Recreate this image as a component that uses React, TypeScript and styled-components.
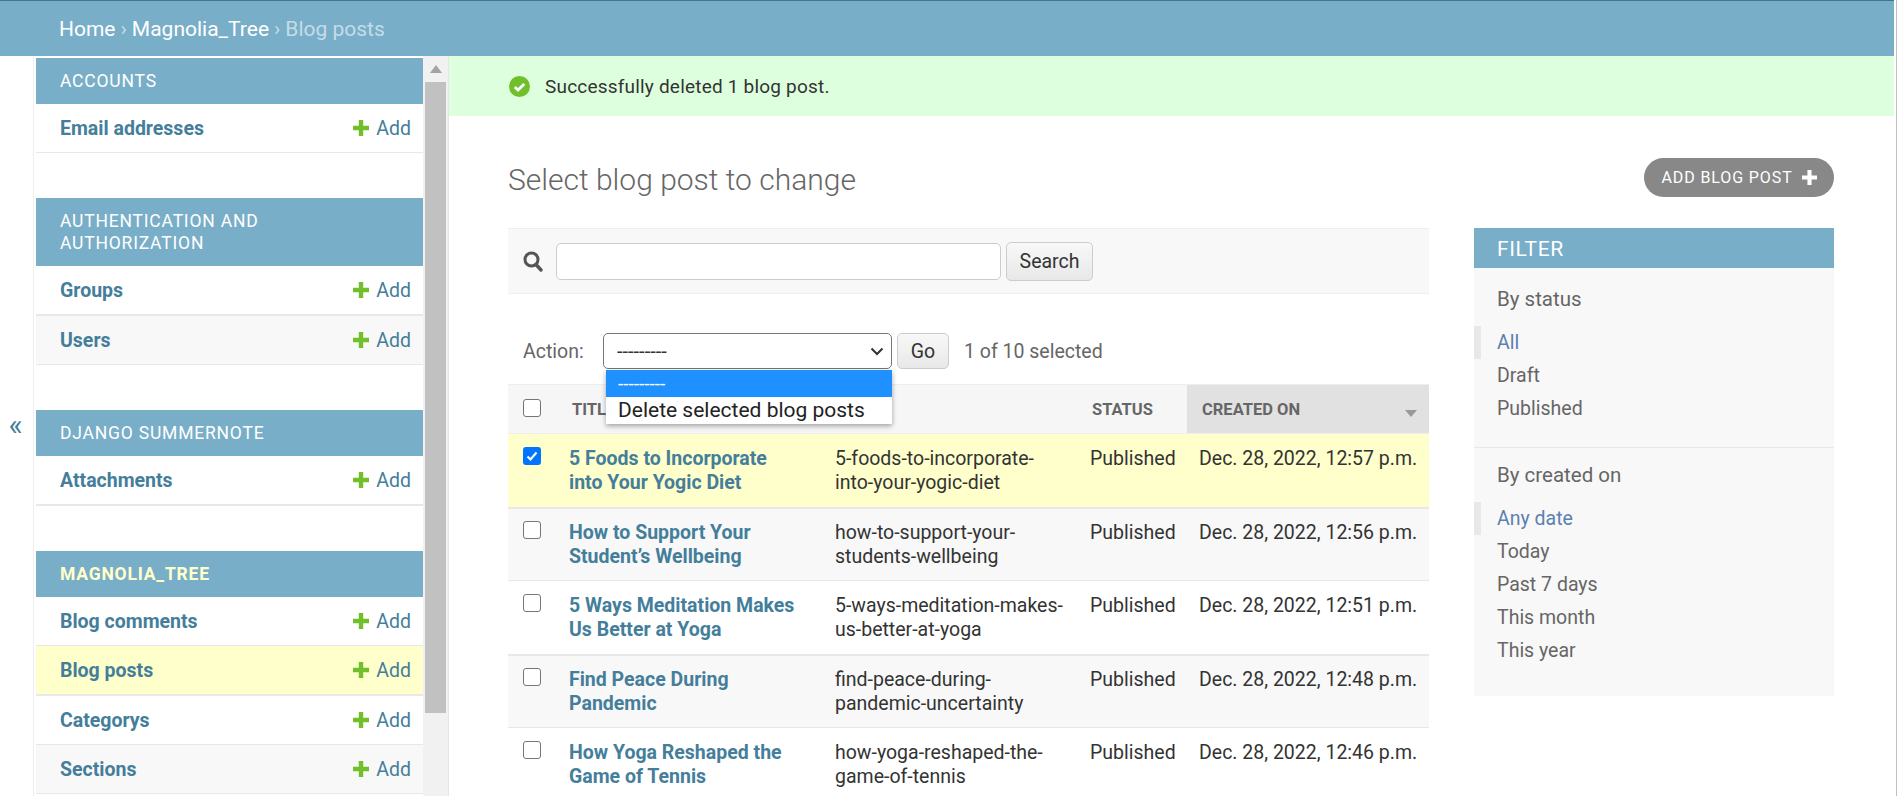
import React from 'react'
import styled, { createGlobalStyle } from 'styled-components'

const GlobalStyle = createGlobalStyle`
  html, body {
    margin: 0;
    padding: 0;
    height: 100%;
    overflow: hidden;
    background: #fff;
    font-family: Roboto, "Liberation Sans", sans-serif;
    color: #333;
  }
  * { box-sizing: border-box; }
`

const Page = styled.div`
  width: 1897px;
  height: 796px;
  display: flex;
  flex-direction: column;
  overflow: hidden;
  padding-right: 2px;
  border-right: 1px solid #c0c0c0;
`

const Header = styled.header`
  height: 56px;
  flex: none;
  background: #79aec8;
  border-top: 1px solid #417690;
  padding: 0 0 0 59px;
  display: flex;
  align-items: center;
  font-size: 21px;
  color: #fff;
`

const Crumb = styled.a<{ $current?: boolean }>`
  color: ${(p) => (p.$current ? '#c4dce8' : '#fff')};
`

const CrumbSep = styled.span`
  color: #c4dce8;
  margin: 0 5px;
`

const Body = styled.div`
  flex: 1;
  display: flex;
  min-height: 0;
`

const Toggle = styled.div`
  width: 34px;
  flex: none;
  border-right: 1px solid #eee;
  display: flex;
  align-items: center;
  justify-content: center;
  padding: 0 2px 4px 0;
  color: #447e9b;
  font-size: 30px;
`

const Nav = styled.nav`
  width: 389px;
  flex: none;
  padding: 2px 0 0 2px;
  overflow: hidden;
`

const Module = styled.section`
  margin-bottom: 45px;
`

const Caption = styled.div<{ $active?: boolean }>`
  background: #79aec8;
  color: ${(p) => (p.$active ? '#ffc' : '#fff')};
  font-size: 17.5px;
  font-weight: ${(p) => (p.$active ? 700 : 400)};
  letter-spacing: 0.8px;
  line-height: 22px;
  padding: 12px 80px 12px 24px;
  text-transform: uppercase;
`

const NavRow = styled.div<{ $thick?: boolean; $alt?: boolean; $active?: boolean }>`
  height: ${(p) => (p.$thick ? 50 : 49)}px;
  display: flex;
  align-items: center;
  justify-content: space-between;
  padding: 0 12px 0 24px;
  font-size: 19.5px;
  background: ${(p) => (p.$active ? '#ffc' : p.$alt ? '#f8f8f8' : '#fff')};
  border-bottom: ${(p) => (p.$thick ? 2 : 1)}px solid #e8e8e8;
`

const ModelLink = styled.a`
  color: #447e9b;
  font-weight: 700;
`

const AddLink = styled.a`
  display: flex;
  align-items: center;
  gap: 7px;
  color: #447e9b;
`

const Scrollbar = styled.div`
  width: 26px;
  flex: none;
  background: #f1f1f1;
  border-right: 1px solid #e6e6e6;
  padding: 0 2px 0 2px;
  display: flex;
  flex-direction: column;
  align-items: stretch;
`

const ScrollArrow = styled.div`
  height: 26px;
  display: flex;
  align-items: center;
  justify-content: center;
`

const ScrollThumb = styled.div`
  height: 631px;
  background: #c1c1c1;
`

const Main = styled.main`
  flex: 1;
  min-width: 0;
`

const Message = styled.div`
  height: 60px;
  background: #dfd;
  display: flex;
  align-items: center;
  gap: 15px;
  padding-left: 60px;
  font-size: 19px;
  letter-spacing: 0.2px;
  color: #333;
`

const Content = styled.div`
  padding: 0 60px 0 59px;
`

const TitleRow = styled.div`
  height: 112px;
  display: flex;
  justify-content: space-between;
`

const Title = styled.h1`
  margin: 43px 0 0;
  font-size: 30px;
  line-height: 42px;
  font-weight: 300;
  color: #666;
`

const AddButton = styled.a`
  margin-top: 42px;
  height: 39px;
  width: 190px;
  border-radius: 20px;
  background: #888;
  color: #fff;
  font-size: 16px;
  letter-spacing: 0.9px;
  display: flex;
  align-items: center;
  justify-content: center;
  gap: 9px;
`

const Columns = styled.div`
  display: flex;
  gap: 45px;
  align-items: flex-start;
`

const Changelist = styled.div`
  width: 921px;
  flex: none;
`

const SearchBar = styled.div`
  height: 66px;
  background: #f8f8f8;
  border-top: 1px solid #eee;
  border-bottom: 1px solid #eee;
  display: flex;
  align-items: center;
  gap: 5px;
  padding-left: 15px;
`

const SearchGlass = styled.svg`
  margin-right: 8px;
`

const SearchInput = styled.div`
  width: 445px;
  height: 37px;
  background: #fff;
  border: 1px solid #ccc;
  border-radius: 5px;
`

const Button = styled.div<{ $w: number; $h: number }>`
  width: ${(p) => p.$w}px;
  height: ${(p) => p.$h}px;
  border: 1px solid #ccc;
  border-radius: 5px;
  background: linear-gradient(#f8f8f8, #e8e8e8);
  color: #333;
  font-size: 19.5px;
  display: flex;
  align-items: center;
  justify-content: center;
`

const Actions = styled.div`
  height: 90px;
  display: flex;
  align-items: center;
  padding: 24px 0 0 15px;
  font-size: 19.5px;
  color: #666;
  position: relative;
`

const ActionLabel = styled.span`
  width: 80px;
`

const SelectBox = styled.div`
  width: 289px;
  height: 36px;
  margin-right: 5px;
  background: #fff;
  border: 1px solid #767676;
  border-radius: 5px;
  display: flex;
  align-items: center;
  justify-content: space-between;
  padding: 0 7px 0 13px;
  font-size: 20px;
  color: #333;
`

const Counter = styled.span`
  margin-left: 15px;
`

const DropDown = styled.div`
  position: absolute;
  left: 98px;
  top: 76px;
  width: 286px;
  height: 54px;
  background: #fff;
  box-shadow: 0 2px 5px rgba(0, 0, 0, 0.35);
  z-index: 5;
  color: #222;
`

const Option = styled.div<{ $selected?: boolean }>`
  height: 27px;
  line-height: 27px;
  padding-left: 12px;
  font-size: ${(p) => (p.$selected ? 19 : 21)}px;
  background: ${(p) => (p.$selected ? '#1e90ff' : 'transparent')};
  color: ${(p) => (p.$selected ? '#fff' : '#222')};
`

const Table = styled.table`
  width: 921px;
  table-layout: fixed;
  border-collapse: collapse;
`

const Th = styled.th<{ $sorted?: boolean; $pad: number }>`
  height: 49px;
  padding: 1px 0 0 ${(p) => p.$pad}px;
  background: ${(p) => (p.$sorted ? '#e1e1e1' : '#f6f6f6')};
  border-top: 1px solid #eee;
  border-bottom: 1px solid #eee;
  color: #666;
  font-size: 16.5px;
  font-weight: 700;
  text-align: left;
  text-transform: uppercase;
  position: relative;
`

const SortArrow = styled.span`
  position: absolute;
  right: 12px;
  top: 25px;
  width: 0;
  height: 0;
  border-left: 6px solid transparent;
  border-right: 6px solid transparent;
  border-top: 7px solid #999;
`

const Tr = styled.tr<{ $selected?: boolean; $alt?: boolean }>`
  background: ${(p) => (p.$selected ? '#ffc' : p.$alt ? '#f8f8f8' : '#fff')};
`

const Td = styled.td<{ $thick?: boolean; $right?: number }>`
  padding: ${(p) => (p.$thick ? 13 : 12)}px ${(p) => p.$right ?? 0}px 0 12px;
  height: ${(p) => (p.$thick ? 74 : 73)}px;
  vertical-align: top;
  font-size: 19.5px;
  line-height: 24px;
  color: #333;
  border-bottom: ${(p) => (p.$thick ? 2 : 1)}px solid #e8e8e8;
`

const RowTitle = styled.a`
  color: #447e9b;
  font-weight: 700;
`

const Check = styled.span<{ $checked?: boolean }>`
  display: flex;
  align-items: center;
  justify-content: center;
  width: 18px;
  height: 18px;
  margin-left: 3px;
  border-radius: 3px;
  background: ${(p) => (p.$checked ? '#0075ff' : '#fff')};
  border: ${(p) => (p.$checked ? 'none' : '1.5px solid #767676')};
`

const HeadCheck = styled(Check)`
  margin-top: -3px;
`

const Filter = styled.aside`
  width: 360px;
  height: 468px;
  flex: none;
  background: #f8f8f8;
`

const FilterTitle = styled.div`
  height: 40px;
  line-height: 42px;
  padding-left: 23px;
  background: #79aec8;
  color: #fff;
  font-size: 21px;
  letter-spacing: 0.6px;
`

const FilterGroup = styled.div<{ $last?: boolean }>`
  padding: ${(p) => (p.$last ? 12 : 16)}px 0 ${(p) => (p.$last ? 0 : 22)}px;
  border-bottom: ${(p) => (p.$last ? 'none' : '1px solid #e8e8e8')};
`

const FilterHeading = styled.div`
  padding-left: 23px;
  height: 30px;
  line-height: 30px;
  margin-bottom: 12px;
  font-size: 20.5px;
  color: #666;
`

const FilterItem = styled.div<{ $current?: boolean }>`
  height: 33px;
  line-height: 33px;
  padding-left: ${(p) => (p.$current ? 16 : 23)}px;
  border-left: ${(p) => (p.$current ? '7px solid #e8e8e8' : 'none')};
  font-size: 19.5px;
  color: ${(p) => (p.$current ? '#5b80b2' : '#666')};
`

const PlusIcon = ({ color = '#70bf2b', size = 16 }: { color?: string; size?: number }) => (
  <svg width={size} height={size} viewBox="0 0 16 16">
    <path d="M5.8 0h4.4v5.8H16v4.4h-5.8V16H5.8v-5.8H0V5.8h5.8z" fill={color} />
  </svg>
)

const CheckCircle = () => (
  <svg width="21" height="21" viewBox="0 0 21 21">
    <circle cx="10.5" cy="10.5" r="10.5" fill="#70bf2b" />
    <path d="M5.8 11l3.2 3.1 6.2-6.2" fill="none" stroke="#fff" strokeWidth="2.8" />
  </svg>
)

const modules = [
  { name: 'Accounts', rows: ['Email addresses'] },
  { name: 'Authentication and Authorization', rows: ['Groups', 'Users'] },
  { name: 'Django Summernote', rows: ['Attachments'] },
  { name: 'Magnolia_Tree', active: true, rows: ['Blog comments', 'Blog posts', 'Categorys', 'Sections'] },
]

const posts = [
  ['5 Foods to Incorporate into Your Yogic Diet', '5-foods-to-incorporate-into-your-yogic-diet', '12:57'],
  ['How to Support Your Student’s Wellbeing', 'how-to-support-your-students-wellbeing', '12:56'],
  ['5 Ways Meditation Makes Us Better at Yoga', '5-ways-meditation-makes-us-better-at-yoga', '12:51'],
  ['Find Peace During Pandemic', 'find-peace-during-pandemic-uncertainty', '12:48'],
  ['How Yoga Reshaped the Game of Tennis', 'how-yoga-reshaped-the-game-of-tennis', '12:46'],
]

const App: React.FC = () => {
  return (
    <Page>
      <GlobalStyle />
      <Header>
        <Crumb>Home</Crumb>
        <CrumbSep>›</CrumbSep>
        <Crumb>Magnolia_Tree</Crumb>
        <CrumbSep>›</CrumbSep>
        <Crumb $current>Blog posts</Crumb>
      </Header>
      <Body>
        <Toggle>«</Toggle>
        <Nav>
          {modules.map((m) => (
            <Module key={m.name}>
              <Caption $active={m.active}>{m.name}</Caption>
              {m.rows.map((r, i) => (
                <NavRow key={r} $alt={i % 2 === 1} $active={r === 'Blog posts'} $thick={r === 'Groups' || r === 'Attachments' || r === 'Blog posts'}>
                  <ModelLink>{r}</ModelLink>
                  <AddLink>
                    <PlusIcon />
                    Add
                  </AddLink>
                </NavRow>
              ))}
            </Module>
          ))}
        </Nav>
        <Scrollbar>
          <ScrollArrow>
            <svg width="12" height="8" viewBox="0 0 12 8">
              <path d="M6 0l6 8H0z" fill="#a3a3a3" />
            </svg>
          </ScrollArrow>
          <ScrollThumb />
        </Scrollbar>
        <Main>
          <Message>
            <CheckCircle />
            Successfully deleted 1 blog post.
          </Message>
          <Content>
            <TitleRow>
              <Title>Select blog post to change</Title>
              <AddButton>
                ADD BLOG POST
                <PlusIcon color="#fff" size={15} />
              </AddButton>
            </TitleRow>
            <Columns>
              <Changelist>
                <SearchBar>
                  <SearchGlass width="20" height="21" viewBox="0 0 20 21">
                    <circle cx="8.5" cy="8.5" r="6.5" fill="none" stroke="#555" strokeWidth="3" />
                    <path d="M13 13.5l5 5.5" stroke="#555" strokeWidth="3.4" strokeLinecap="round" />
                  </SearchGlass>
                  <SearchInput />
                  <Button $w={87} $h={39}>Search</Button>
                </SearchBar>
                <Actions>
                  <ActionLabel>Action:</ActionLabel>
                  <SelectBox>
                    ---------
                    <svg width="14" height="9" viewBox="0 0 14 9">
                      <path d="M1.5 1.5L7 7l5.5-5.5" fill="none" stroke="#333" strokeWidth="2" />
                    </svg>
                  </SelectBox>
                  <Button $w={52} $h={36}>Go</Button>
                  <Counter>1 of 10 selected</Counter>
                  <DropDown>
                    <Option $selected>---------</Option>
                    <Option>Delete selected blog posts</Option>
                  </DropDown>
                </Actions>
                <Table>
                  <colgroup>
                    <col style={{ width: 49 }} />
                    <col style={{ width: 266 }} />
                    <col style={{ width: 255 }} />
                    <col style={{ width: 109 }} />
                    <col style={{ width: 242 }} />
                  </colgroup>
                  <thead>
                    <tr>
                      <Th $pad={12}><HeadCheck /></Th>
                      <Th $pad={15}>Title</Th>
                      <Th $pad={15} />
                      <Th $pad={14}>Status</Th>
                      <Th $pad={15} $sorted>Created on<SortArrow /></Th>
                    </tr>
                  </thead>
                  <tbody>
                    {posts.map((p, i) => {
                      const thick = i % 2 === 0
                      return (
                        <Tr key={p[1]} $selected={i === 0} $alt={i % 2 === 1}>
                          <Td $thick={thick}>
                            <Check $checked={i === 0}>
                              {i === 0 && (
                                <svg width="14" height="14" viewBox="0 0 14 14">
                                  <path d="M2.5 7.5l3 3 6-7" fill="none" stroke="#fff" strokeWidth="2.2" />
                                </svg>
                              )}
                            </Check>
                          </Td>
                          <Td $thick={thick} $right={24}><RowTitle>{p[0]}</RowTitle></Td>
                          <Td $thick={thick} $right={13}>{p[1]}</Td>
                          <Td $thick={thick}>Published</Td>
                          <Td $thick={thick}>Dec. 28, 2022, {p[2]} p.m.</Td>
                        </Tr>
                      )
                    })}
                  </tbody>
                </Table>
              </Changelist>
              <Filter>
                <FilterTitle>FILTER</FilterTitle>
                <FilterGroup>
                  <FilterHeading>By status</FilterHeading>
                  <FilterItem $current>All</FilterItem>
                  <FilterItem>Draft</FilterItem>
                  <FilterItem>Published</FilterItem>
                </FilterGroup>
                <FilterGroup $last>
                  <FilterHeading>By created on</FilterHeading>
                  <FilterItem $current>Any date</FilterItem>
                  <FilterItem>Today</FilterItem>
                  <FilterItem>Past 7 days</FilterItem>
                  <FilterItem>This month</FilterItem>
                  <FilterItem>This year</FilterItem>
                </FilterGroup>
              </Filter>
            </Columns>
          </Content>
        </Main>
      </Body>
    </Page>
  )
}

export default App
